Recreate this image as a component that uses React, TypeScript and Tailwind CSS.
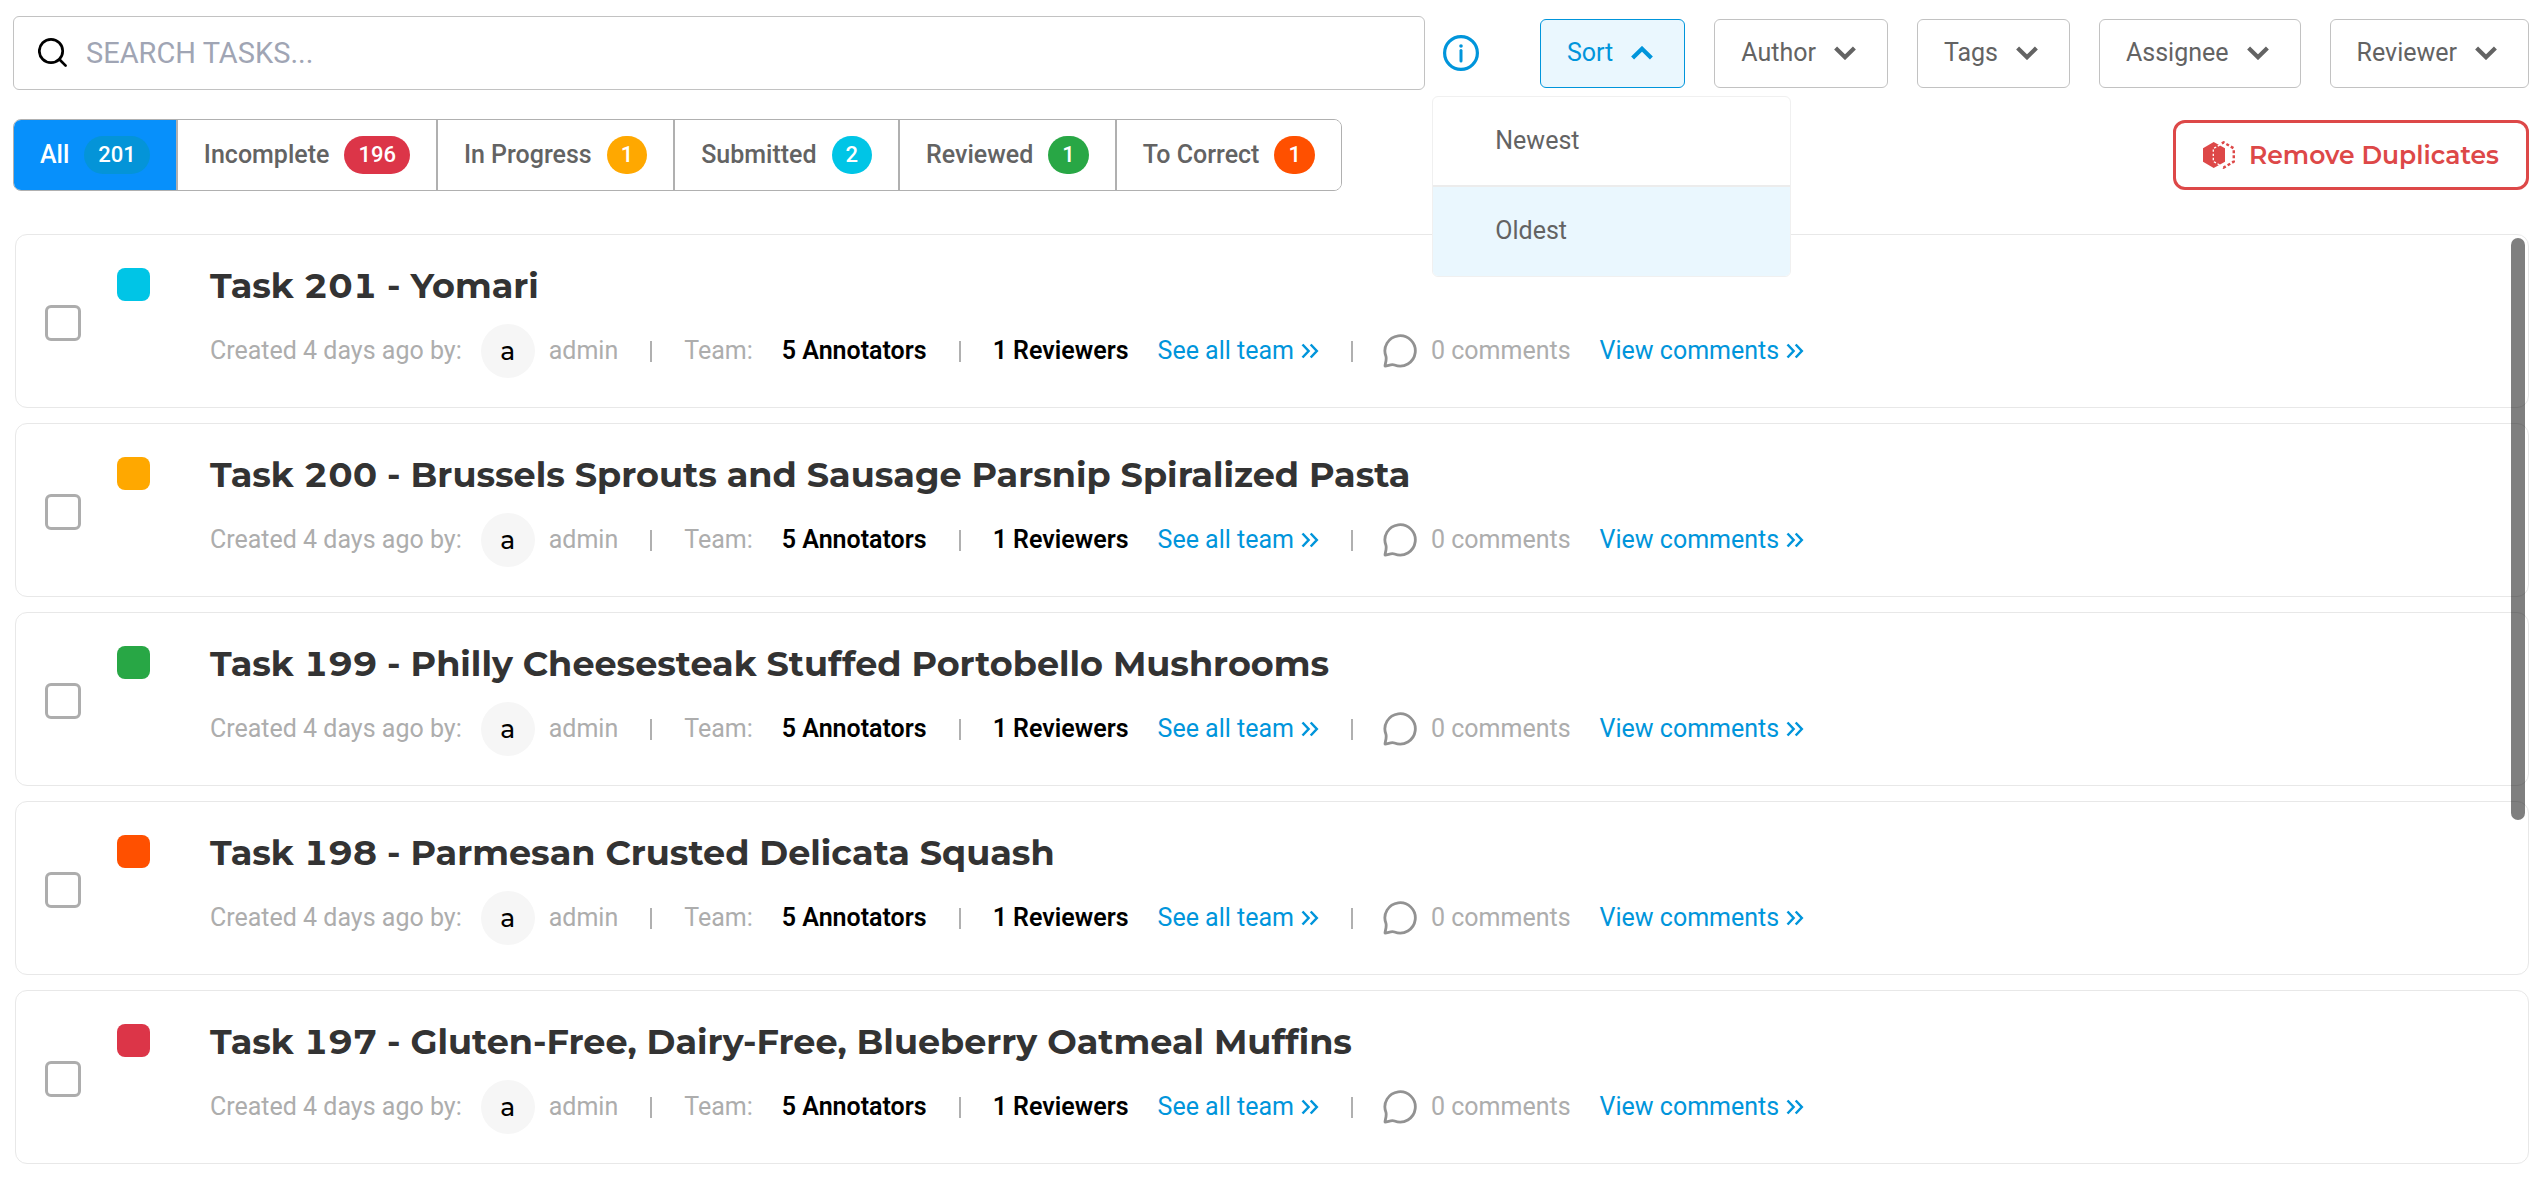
import { useState } from "react";

const tabs = [
  { label: "All", count: 201, badge: "bg-[#0494d8]" },
  { label: "Incomplete", count: 196, badge: "bg-[#dc3548]" },
  { label: "In Progress", count: 1, badge: "bg-[#ffa800]" },
  { label: "Submitted", count: 2, badge: "bg-[#00c5e6]" },
  { label: "Reviewed", count: 1, badge: "bg-[#28a745]" },
  { label: "To Correct", count: 1, badge: "bg-[#ff5000]" },
];

const tasks = [
  { title: "Task 201 - Yomari", color: "bg-[#00c5e6]" },
  { title: "Task 200 - Brussels Sprouts and Sausage Parsnip Spiralized Pasta", color: "bg-[#ffa800]" },
  { title: "Task 199 - Philly Cheesesteak Stuffed Portobello Mushrooms", color: "bg-[#28a745]" },
  { title: "Task 198 - Parmesan Crusted Delicata Squash", color: "bg-[#ff5000]" },
  { title: "Task 197 - Gluten-Free, Dairy-Free, Blueberry Oatmeal Muffins", color: "bg-[#dc3548]" },
];

function SearchIcon() {
  return (
    <svg viewBox="0 0 32 32" className="size-8 shrink-0" fill="none" stroke="#000" strokeWidth="2.7" strokeLinecap="round">
      <circle cx="13" cy="14" r="11.7" />
      <path d="M21.500 22.500 27.600 28.600" />
    </svg>
  );
}

function InfoIcon() {
  return (
    <svg viewBox="0 0 36 36" className="size-9" fill="none" stroke="#0095db">
      <circle cx="18" cy="18" r="16.4" strokeWidth="3.2" />
      <path d="M18 15.5v10.5" strokeWidth="3" strokeLinecap="round" />
      <circle cx="18" cy="11" r="1.8" fill="#0095db" stroke="none" />
    </svg>
  );
}

function Chevron({ up = false }: { up?: boolean }) {
  return (
    <svg viewBox="0 0 22 14" className="w-[22px]" fill="none" stroke="currentColor" strokeWidth="4.2">
      <path d={up ? "M1.6 12 11 2.8 20.4 12" : "M1.6 2 11 11.2 20.4 2"} />
    </svg>
  );
}

function DoubleChevron() {
  return (
    <svg viewBox="0 0 18 16" className="w-[18px]" fill="none" stroke="currentColor" strokeWidth="2.5">
      <path d="M1.500 1.500 7.600 8l-6.100 6.500M9.700 1.500 15.800 8l-6.100 6.500" />
    </svg>
  );
}

function DuplicateIcon() {
  return (
    <svg viewBox="0 0 32 28" className="w-8" fill="none" stroke="#dd4848">
      <path d="M10.700 1 22 7.300v13.400L10.700 27 0 20.700V7.300z" fill="#dd4848" stroke="none" />
      <path d="M20.500 1.800 10.300 7.600v12.800l10.200 5.800" stroke="#fff" strokeWidth="1.300" strokeDasharray="2.400 1.800" />
      <path d="M18.800 2.300 20.600 1.400 30.800 7.400v13.200l-10.200 6-1.800-.9" strokeWidth="2.500" strokeDasharray="3 2.200" />
    </svg>
  );
}

function CommentIcon() {
  return (
    <svg viewBox="0 0 34 34" className="size-[34px]" fill="none" stroke="#929292" strokeWidth="2.8" strokeLinejoin="round">
      <path d="M2 32c.2-3 1.800-5.500 1-9.500A15.200 15.200 0 1 1 11.500 31C8.500 29.800 5.500 31.700 2 32z" />
    </svg>
  );
}

function Divider() {
  return <span className="h-[21px] w-[2px] bg-[#b0b0b0]" />;
}

function FilterButton({ label }: { label: string }) {
  return (
    <button className="flex h-[69px] items-center gap-[18px] rounded-md border border-[#c2c2c2] bg-white pr-[31px] pl-[26px]">
      {label}
      <Chevron />
    </button>
  );
}

function TaskCard({ title, color }: { title: string; color: string }) {
  return (
    <li className="flex h-[174px] rounded-xl border border-[#e8e8e8] bg-white pl-[29px]">
      <input
        type="checkbox"
        aria-label={title}
        className="mt-[70px] mr-9 size-9 shrink-0 appearance-none rounded-md border-[3px] border-[#adadad] bg-white"
      />
      <span className={"mt-[33px] size-[33px] shrink-0 rounded-lg " + color} />
      <div className="ml-[60px] pt-7">
        <h2 className="font-['Montserrat','Open_Sans',sans-serif] text-[35px] leading-[46px] font-bold text-[#333] tabular-nums">
          {title}
        </h2>
        <div className="mt-[15px] flex h-[54px] items-center whitespace-nowrap text-[#adadad]">
          <span>Created 4 days ago by:</span>
          <span className="mr-[14px] ml-[19px] flex size-[54px] items-center justify-center rounded-full bg-[#f6f6f6] font-['Montserrat','Noto_Sans',sans-serif] font-medium text-black">
            a
          </span>
          <span className="mr-8">admin</span>
          <Divider />
          <span className="mr-[29px] ml-8">Team:</span>
          <strong className="mr-8 font-semibold text-black">5 Annotators</strong>
          <Divider />
          <strong className="mr-[29px] ml-8 font-semibold text-black">1 Reviewers</strong>
          <a href="#team" className="mr-8 flex items-center gap-[7px] text-[#0095db]">
            See all team
            <DoubleChevron />
          </a>
          <Divider />
          <span className="mr-[29px] ml-[30px] flex items-center gap-[14px]">
            <CommentIcon />0 comments
          </span>
          <a href="#comments" className="flex items-center gap-[7px] text-[#0095db]">
            View comments
            <DoubleChevron />
          </a>
        </div>
      </div>
    </li>
  );
}

export default function App() {
  const [active, setActive] = useState("All");
  return (
    <main className="min-h-screen bg-white pt-4 pr-[11px] pl-[13px] font-['Roboto',sans-serif] text-[25px] leading-8 text-[#636363]">
      <div className="flex items-center">
        <label className="flex h-[74px] flex-1 items-center gap-4 rounded-md border border-[#c2c2c2] pl-6">
          <SearchIcon />
          <input
            aria-label="Search tasks"
            placeholder="SEARCH TASKS..."
            className="min-w-0 flex-1 bg-transparent text-[29px] outline-none placeholder:text-[#a0a5b4]"
          />
        </label>
        <button aria-label="Search help" className="mr-[61px] ml-[18px]">
          <InfoIcon />
        </button>
        <div className="flex gap-[29px]">
          <div className="relative">
            <button
              aria-expanded="true"
              className="flex h-[69px] items-center gap-[18px] rounded-md border border-[#0095db] bg-[#eaf7fe] pr-[31px] pl-[26px] text-[#0095db]"
            >
              Sort
              <Chevron up />
            </button>
            <div className="absolute top-[77px] right-[-106px] z-10 w-[359px] overflow-hidden rounded-md border border-[#f0f0f0] bg-white">
              <button className="flex h-[90px] w-full items-center border-b-2 border-[#ececec] pl-[62px]">Newest</button>
              <button className="flex h-[89px] w-full items-center bg-[#eaf7fe] pl-[62px]">Oldest</button>
            </div>
          </div>
          <FilterButton label="Author" />
          <FilterButton label="Tags" />
          <FilterButton label="Assignee" />
          <FilterButton label="Reviewer" />
        </div>
      </div>

      <div className="mt-[29px] flex items-center justify-between">
        <div className="flex h-[72px] divide-x-2 divide-[#b0b0b0] overflow-hidden rounded-lg border border-[#b0b0b0] font-medium">
          {tabs.map((t) => (
            <button
              key={t.label}
              onClick={() => setActive(t.label)}
              className={
                "flex items-center gap-[15px] px-[26px] " + (active === t.label ? "bg-[#0790fb] text-white" : "bg-white")
              }
            >
              {t.label}
              <span
                className={"flex h-[38px] items-center justify-center rounded-full px-[14px] text-[22px] text-white " + t.badge}
              >
                {t.count}
              </span>
            </button>
          ))}
        </div>
        <button className="flex h-[70px] items-center gap-[14px] rounded-xl border-[3px] border-[#dd4848] px-[27px] font-['Montserrat','Open_Sans',sans-serif] font-semibold text-[#dd4848]">
          <DuplicateIcon />
          Remove Duplicates
        </button>
      </div>

      <div className="relative mt-[43px] ml-[2px]">
        <ul className="flex flex-col gap-[15px]">
          {tasks.map((t) => (
            <TaskCard key={t.title} {...t} />
          ))}
        </ul>
        <div className="absolute top-1 right-1 h-[582px] w-[14px] rounded-full bg-black/50" />
      </div>
    </main>
  );
}
